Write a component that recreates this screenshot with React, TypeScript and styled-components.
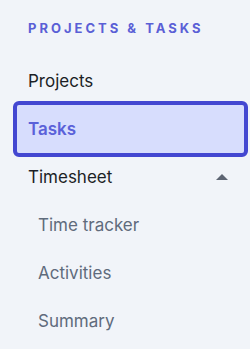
import React from "react";
import styled, { createGlobalStyle } from "styled-components";

const Global = createGlobalStyle`
  html, body { margin: 0; padding: 0; background: #f1f4f9; }
  body { font-family: Inter, "Noto Sans", sans-serif; -webkit-font-smoothing: antialiased; }
`;

const Nav = styled.nav`
  width: 250px;
  height: 349px;
  box-sizing: border-box;
  padding: 19px 6px 0 17px;
  background: #f1f4f9;
  display: flex;
  flex-direction: column;
`;

const Heading = styled.div`
  padding-left: 11px;
  font-size: 13px;
  line-height: 18px;
  font-weight: 700;
  letter-spacing: 3px;
  color: #5a5fd6;
  margin-bottom: 20px;
`;

const List = styled.ul`
  list-style: none;
  margin: 0;
  padding: 0;
  display: flex;
  flex-direction: column;
`;

const Row = styled.li<{ $active?: boolean; $sub?: boolean }>`
  height: 48px;
  box-sizing: border-box;
  display: flex;
  align-items: center;
  justify-content: space-between;
  padding: 0 16px 0 ${(p) => (p.$sub ? "21px" : "11px")};
  font-size: 17px;
  line-height: 24px;
  font-weight: ${(p) => (p.$active ? 600 : 400)};
  color: ${(p) => (p.$active ? "#5a61d9" : p.$sub ? "#5f6b7c" : "#1c1f26")};
  background: ${(p) => (p.$active ? "#d7ddfd" : "transparent")};
  outline: ${(p) => (p.$active ? "4px solid #4347d1" : "none")};
  border-radius: 2px;
`;

const Caret = styled.span`
  width: 0;
  height: 0;
  border-left: 6px solid transparent;
  border-right: 6px solid transparent;
  border-bottom: 6px solid #5d6573;
`;

export default function App() {
  return (
    <>
      <Global />
      <Nav>
        <Heading>PROJECTS &amp; TASKS</Heading>
        <List>
          <Row>Projects</Row>
          <Row $active>Tasks</Row>
          <Row>
            <span>Timesheet</span>
            <Caret />
          </Row>
          <Row $sub>Time tracker</Row>
          <Row $sub>Activities</Row>
          <Row $sub>Summary</Row>
        </List>
      </Nav>
    </>
  );
}
